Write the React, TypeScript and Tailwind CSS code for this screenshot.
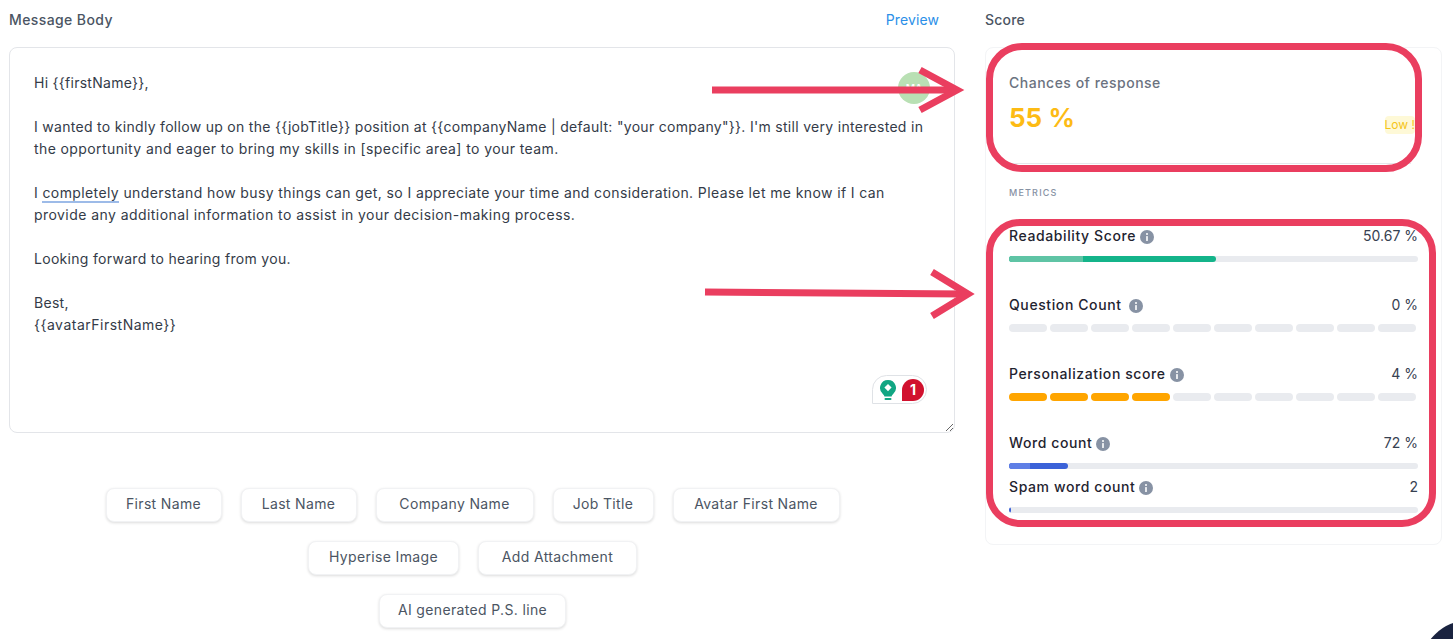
const font = { fontFamily: '"Inter", "Liberation Sans", sans-serif' };

const rows = [
  [
    { label: "First Name", width: "w-[116px]" },
    { label: "Last Name", width: "w-[116px]" },
    { label: "Company Name", width: "w-[158px]" },
    { label: "Job Title", width: "w-[101px]" },
    { label: "Avatar First Name", width: "w-[167px]" },
  ],
  [
    { label: "Hyperise Image", width: "w-[151px]" },
    { label: "Add Attachment", width: "w-[159px]" },
  ],
  [{ label: "AI generated P.S. line", width: "w-[187px]" }],
];

function Info() {
  return (
    <svg width="14" height="14" viewBox="0 0 14 14" className="shrink-0">
      <circle cx="7" cy="7" r="7" fill="#8792a4" />
      <circle cx="7" cy="4" r="1" fill="#fff" />
      <rect x="6.2" y="6" width="1.6" height="5" rx="0.6" fill="#fff" />
    </svg>
  );
}

function Label({ name, value, gap = "ml-1" }: { name: string; value: string; gap?: string }) {
  return (
    <div className="flex items-center justify-between h-5 pb-[2px] text-[14px]">
      <div className="flex items-center font-medium tracking-[0.6px] text-[#1f2430]">
        <span>{name}</span>
        <span className={`${gap} pt-[3px]`}>
          <Info />
        </span>
      </div>
      <span className="text-[#374151]">{value}</span>
    </div>
  );
}

function Segments({ filled }: { filled: number }) {
  return (
    <div className="flex gap-[2.6px] w-[407px] h-2">
      {Array.from({ length: 10 }).map((_, i) => (
        <div key={i} className={i < filled ? "flex-1 rounded-full bg-[#ffa500]" : "flex-1 rounded-full bg-[#e9ebef]"} />
      ))}
    </div>
  );
}

function Bar({ fill, light, lightColor, color }: { fill: string; light: string; lightColor: string; color: string }) {
  return (
    <div className="h-1.5 rounded-full bg-[#e9ebef] overflow-hidden flex">
      <div className={`${fill} h-full rounded-r-full flex ${color}`}>
        <div className={`${light} h-full ${lightColor}`} />
      </div>
    </div>
  );
}

function GrammarlyBadge() {
  return (
    <div className="absolute left-[863px] top-[328px] w-[55px] h-[29px] bg-white border border-[#dfe2e6] rounded-r-[15px] rounded-tl-[15px] flex items-center pl-[6px] gap-[5px]">
      <svg width="18" height="22" viewBox="0 0 18 22">
        <path d="M9 1a8 8 0 0 0-5 14.2c.8.7 1.2 1.3 1.4 2.3h7.2c.2-1 .6-1.6 1.4-2.3A8 8 0 0 0 9 1z" fill="#11a683" />
        <path d="M9 5l3.6 3.6L9 12.2 5.4 8.6z" fill="#fff" />
        <rect x="5.5" y="19" width="7" height="2" rx="1" fill="#11a683" />
      </svg>
      <div className="w-[22px] h-[22px] bg-[#d1112e] rounded-t-full rounded-br-full flex items-center justify-center text-white text-[14px] font-bold">
        1
      </div>
    </div>
  );
}

export default function App() {
  return (
    <div className="relative w-[1453px] h-[639px] overflow-hidden bg-white" style={font}>
      <div className="flex pl-[9px]">
        <div className="w-[946px]">
          <div className="h-[47px] flex justify-between items-start pt-[9px] pr-[16px] text-[14px] font-medium text-[#4b5563]">
            <span className="tracking-[0.4px]">Message Body</span>
            <span className="font-normal tracking-[0.1px] text-[#2b8fe8]">Preview</span>
          </div>
          <div className="relative">
            <div className="resize overflow-auto h-[386px] border border-[#e3e5e9] rounded-lg pl-[24px] pr-[20px] pt-[24px] text-[14px] leading-[22px] text-[#343b48] whitespace-nowrap">
              <div className="tracking-[0.27px]">{"Hi {{firstName}},"}</div>
              <div className="mt-[22px] tracking-[0.3px]">
                {'I wanted to kindly follow up on the {{jobTitle}} position at {{companyName | default: "your company"}}. I\'m still very interested in'}
              </div>
              <div className="tracking-[0.4px]">the opportunity and eager to bring my skills in [specific area] to your team.</div>
              <div className="mt-[22px] tracking-[0.39px]">
                <span>I </span>
                <span className="border-b-2 border-[#9dbbe8]">completely</span>
                <span> understand how busy things can get, so I appreciate your time and consideration. Please let me know if I can</span>
              </div>
              <div className="tracking-[0.44px]">provide any additional information to assist in your decision-making process.</div>
              <div className="mt-[22px] tracking-[0.3px]">Looking forward to hearing from you.</div>
              <div className="mt-[22px] tracking-[0.3px]">Best,</div>
              <div className="tracking-[0.5px]">{"{{avatarFirstName}}"}</div>
            </div>
            <div className="absolute left-[889px] top-[25px] w-8 h-8 rounded-full bg-[#b9e0b4] flex items-center justify-center text-white text-[10px] font-semibold">
              MA
            </div>
            <GrammarlyBadge />
          </div>
          <div className="mt-[55px] flex flex-col items-center gap-[19px] pr-[19px]">
            {rows.map((row, i) => (
              <div key={i} className="flex gap-[19px]">
                {row.map((b) => (
                  <div
                    key={b.label}
                    className={`${b.width} h-[34px] pb-[3px] flex items-center justify-center rounded-lg bg-white border border-[#f1f2f4] shadow-[0_1px_3px_rgba(0,0,0,0.14)] text-[14px] tracking-[0.35px] text-[#4b5563] whitespace-nowrap`}
                  >
                    {b.label}
                  </div>
                ))}
              </div>
            ))}
          </div>
        </div>

        <div className="ml-[30px] w-[457px]">
          <div className="h-[47px] pt-[9px] text-[14px] tracking-[0.2px] font-medium text-[#4b5563]">Score</div>
          <div className="h-[498px] border border-[#f3f4f6] rounded-lg">
            <div className="h-[116px] ml-[14px] mr-[30px] border-b border-[#e5e7eb] pl-[9px] pt-[24px]">
              <div className="h-5 text-[14px] tracking-[0.5px] font-medium text-[#6b7280]">Chances of response</div>
              <div className="mt-[8px] flex justify-between items-end">
                <span className="h-9 leading-9 text-[26px] font-bold text-[#fdbb14]">55 %</span>
                <span className="mb-[2px] -mr-[4px] h-[18px] leading-[18px] text-[12px] text-[#f5c518] bg-[#fef9d7] rounded whitespace-nowrap">Low !</span>
              </div>
            </div>
            <div className="px-[23px]">
              <div className="mt-[22px] h-[14px] leading-[14px] text-[9px] font-medium tracking-[1.2px] text-[#8792a4]">METRICS</div>
              <div className="mt-[26px]">
                <Label name="Readability Score" value="50.67 %" />
                <div className="mt-[10px]">
                  <Bar fill="w-[207px]" light="w-[74px]" lightColor="bg-[#5fc4a5]" color="bg-[#14b48a]" />
                </div>
              </div>
              <div className="mt-[33px]">
                <Label name="Question Count" value="0 %" gap="ml-[7px]" />
                <div className="mt-[9px]">
                  <Segments filled={0} />
                </div>
              </div>
              <div className="mt-[32px]">
                <Label name="Personalization score" value="4 %" />
                <div className="mt-[9px]">
                  <Segments filled={4} />
                </div>
              </div>
              <div className="mt-[32px]">
                <Label name="Word count" value="72 %" />
                <div className="mt-[10px]">
                  <Bar fill="w-[59px]" light="w-[21px]" lightColor="bg-[#5f7fe6]" color="bg-[#3b62d8]" />
                </div>
              </div>
              <div className="mt-[8px]">
                <Label name="Spam word count" value="2" />
                <div className="mt-[10px]">
                  <Bar fill="w-[2px]" light="w-0" lightColor="bg-[#5f7fe6]" color="bg-[#3b62d8]" />
                </div>
              </div>
            </div>
          </div>
        </div>
      </div>

      {/* annotations drawn on top of the screenshot */}
      <div className="absolute left-[986px] top-[43px] w-[436px] h-[129px] border-[7px] border-[#ea3e5f] rounded-[36px]" />
      <div className="absolute left-[986px] top-[219px] w-[450px] h-[308px] border-[7px] border-[#ea3e5f] rounded-[34px]" />
      <svg className="absolute left-0 top-0" width="1453" height="639" fill="none" stroke="#ea3e5f" strokeWidth="7">
        <path d="M712 90H955" />
        <path d="M920 70L957 90L920 110" />
        <path d="M705 292L966 294" />
        <path d="M932 272L968 294L932 316" />
      </svg>
      <div className="absolute left-[1420px] top-[620px] w-[100px] h-[100px] rounded-full bg-[#1a2340]" />
    </div>
  );
}
